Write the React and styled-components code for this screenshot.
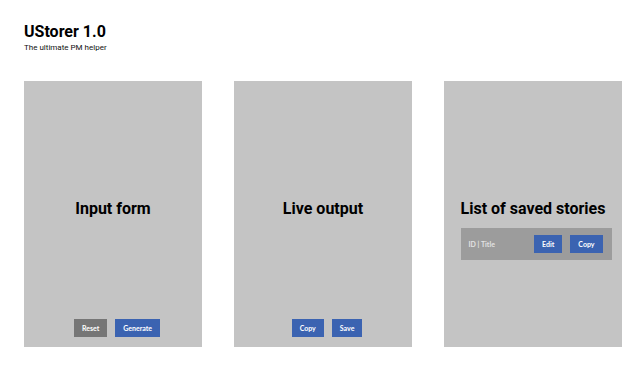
import React from "react";
import styled, { createGlobalStyle } from "styled-components";

const GlobalStyle = createGlobalStyle`
  body {
    margin: 0;
    background: #ffffff;
    font-family: "Roboto", "Liberation Sans", sans-serif;
  }
`;

const Page = styled.div`
  width: 640px;
  height: 379px;
  padding: 22px 0 0 24px;
  box-sizing: border-box;
`;

const Header = styled.header`
  display: flex;
  flex-direction: column;
  gap: 2px;
`;

const Title = styled.h1`
  margin: 0;
  font-size: 16px;
  line-height: 19px;
  font-weight: 700;
  color: #000000;
`;

const Subtitle = styled.p`
  margin: 0;
  font-size: 8px;
  line-height: 10px;
  color: #111111;
`;

const Columns = styled.main`
  display: flex;
  gap: 32px;
  margin-top: 28px;
`;

const Panel = styled.section`
  width: 178px;
  height: 266px;
  background: #c4c4c4;
  display: flex;
  flex-direction: column;
  align-items: center;
  padding: 118px 0 10px;
  box-sizing: border-box;
`;

const PanelTitle = styled.h2`
  margin: 0;
  font-size: 16px;
  line-height: 19px;
  font-weight: 700;
  color: #000000;
  white-space: nowrap;
`;

const ButtonRow = styled.div`
  display: flex;
  margin-top: auto;
`;

const Button = styled.button`
  border: 0;
  height: 18px;
  margin-left: 8px;
  padding: 0 8px;
  background: ${(p) => (p.$muted ? "#767676" : "#3b63b1")};
  color: #ffffff;
  font-family: "Lato", "Liberation Sans", sans-serif;
  font-weight: 700;
  font-size: 7px;
  cursor: pointer;
`;

const StoryRow = styled.div`
  width: 151px;
  height: 32px;
  margin: 10px 0 0 6px;
  background: #9c9c9c;
  display: flex;
  align-items: center;
  padding: 0 9px 0 8px;
  box-sizing: border-box;
`;

const StoryLabel = styled.span`
  flex: 1;
  font-family: "Lato", "Liberation Sans", sans-serif;
  font-weight: 700;
  font-size: 7px;
  color: #e2e2e2;
`;

export default function App() {
  return (
    <Page>
      <GlobalStyle />
      <Header>
        <Title>UStorer 1.0</Title>
        <Subtitle>The ultimate PM helper</Subtitle>
      </Header>
      <Columns>
        <Panel>
          <PanelTitle>Input form</PanelTitle>
          <ButtonRow>
            <Button $muted>Reset</Button>
            <Button>Generate</Button>
          </ButtonRow>
        </Panel>
        <Panel>
          <PanelTitle>Live output</PanelTitle>
          <ButtonRow>
            <Button>Copy</Button>
            <Button>Save</Button>
          </ButtonRow>
        </Panel>
        <Panel>
          <PanelTitle>List of saved stories</PanelTitle>
          <StoryRow>
            <StoryLabel>ID | Title</StoryLabel>
            <Button>Edit</Button>
            <Button>Copy</Button>
          </StoryRow>
        </Panel>
      </Columns>
    </Page>
  );
}
